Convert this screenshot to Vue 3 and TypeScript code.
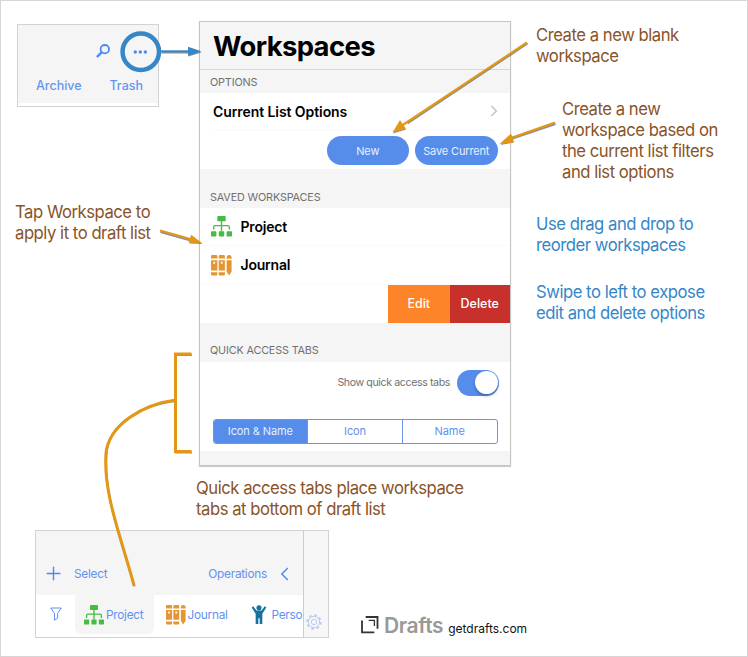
<script setup lang="ts">
import { ref } from 'vue'

interface Workspace { name: string; icon: string; kind: string }
interface Note { id: string; tone: string; lines: string[] }

const workspaces: Workspace[] = [
  { name: 'Project', icon: '#tree', kind: 'green' },
  { name: 'Journal', icon: '#binders', kind: 'amber' },
]
const tabs: Workspace[] = [...workspaces, { name: 'Perso', icon: '#person', kind: 'teal' }]
const segments: string[] = ['Icon & Name', 'Icon', 'Name']
const selected = ref<string>('Icon & Name')
const activeTab = ref<string>('Project')

const notes: Note[] = [
  { id: 'blank', tone: 'brown', lines: ['Create a new blank', 'workspace'] },
  { id: 'current', tone: 'brown', lines: ['Create a new', 'workspace based on', 'the current list filters', 'and list options'] },
  { id: 'tap', tone: 'brown', lines: ['Tap Workspace to', 'apply it to draft list'] },
  { id: 'drag', tone: 'blue', lines: ['Use drag and drop to', 'reorder workspaces'] },
  { id: 'expose', tone: 'blue', lines: ['Swipe to left to expose', 'edit and delete options'] },
  { id: 'quick', tone: 'brown', lines: ['Quick access tabs place workspace', 'tabs at bottom of draft list'] },
]
</script>

<template>
  <main class="canvas">
    <svg class="defs" aria-hidden="true">
      <symbol id="tree" viewBox="0 0 21 21">
        <rect x="6.3" y="0" width="8.4" height="5.2" rx=".7" fill="currentColor" />
        <path d="M10.5 5v10.5M2.7 13.6v-2.4q0-1.6 1.6-1.6h12.4q1.6 0 1.6 1.6v2.4" fill="none" stroke="currentColor" stroke-width="1.4" />
        <rect x="0" y="15.3" width="5.4" height="5.2" rx=".7" fill="currentColor" />
        <rect x="7.8" y="15.3" width="5.4" height="5.2" rx=".7" fill="currentColor" />
        <rect x="15.6" y="15.3" width="5.4" height="5.2" rx=".7" fill="currentColor" />
      </symbol>
      <symbol id="binders" viewBox="0 0 21 21">
        <g fill="currentColor">
          <path d="M1.200 0h4q1.200 0 1.200 1.200V3.600H0V1.200Q0 0 1.200 0zM0 17.200h6.400v2.300q0 1-1.200 1H1.200q-1.200 0-1.200-1z" />
          <path d="M8.900 0h3.800q1.200 0 1.200 1.200V3.600H7.700V1.200Q7.700 0 8.900 0zM7.700 17.200h6.200v2.300q0 1-1.200 1H8.900q-1.200 0-1.200-1z" />
          <path fill-rule="evenodd" d="M0 5.200h6.400v10.400H0zM2.300 6.800v2h1.800v-2zM7.700 5.200h6.200v10.400H7.700zM9.900 6.800v2h1.800v-2z" />
          <path d="M15.600 3.800V2.200q0-2.200 2.500-2.200t2.500 2.200v1.600zM15.600 5.200h5V16.600l-2.500 3.900-2.500-3.900z" />
        </g>
      </symbol>
      <symbol id="person" viewBox="0 0 16 21">
        <circle cx="8" cy="3" r="2.700" fill="currentColor" />
        <path d="M.3 2.700 2 1.300 5.300 5.900h5.400L14 1.300l1.700 1.400-4.200 6.500V20H8.700v-6H7.300v6H4.500V9.200z" fill="currentColor" />
      </symbol>
    </svg>

    <section class="panel folders">
      <div class="folders-body">
        <div class="tools">
          <svg class="key" viewBox="0 0 14 14"><circle cx="8.800" cy="5.200" r="4.200" /><path d="M5.700 8.400 1.500 12.300" /></svg>
          <svg class="dots" viewBox="0 0 14 4"><circle cx="2.300" cy="2" r="1.700" /><circle cx="7.300" cy="2" r="1.700" /><circle cx="12.300" cy="2" r="1.700" /></svg>
        </div>
        <div class="filters"><span>Archive</span><span>Trash</span></div>
      </div>
    </section>

    <section class="panel sheet">
      <h1>Workspaces</h1>
      <h2 class="first">OPTIONS</h2>
      <div class="options">
        <div class="list-options">
          <span>Current List Options</span>
          <svg viewBox="0 0 8 12"><path d="m1.300 1 5 5-5 5" /></svg>
        </div>
        <div class="buttons"><button>New</button><button>Save Current</button></div>
      </div>
      <h2>SAVED WORKSPACES</h2>
      <div class="saved">
        <div v-for="w in workspaces" :key="w.name" class="row">
          <svg class="icon" :class="w.kind"><use :href="w.icon" /></svg>
          <span>{{ w.name }}</span>
        </div>
        <div class="swipe"><span class="edit">Edit</span><span class="delete">Delete</span></div>
      </div>
      <h2 class="last">QUICK ACCESS TABS</h2>
      <div class="quick-tabs">
        <div class="show"><span>Show quick access tabs</span><i class="switch"><i class="knob"></i></i></div>
        <div class="segmented">
          <span v-for="s in segments" :key="s" :class="{ on: s === selected }" @click="selected = s">{{ s }}</span>
        </div>
      </div>
    </section>

    <section class="panel drafts">
      <div class="list">
        <div class="actions">
          <svg class="plus" viewBox="0 0 16 16"><path d="M8 .7v14.600M.7 8h14.600" /></svg>
          <span class="select">Select</span>
          <span class="operations">Operations</span>
          <svg class="back" viewBox="0 0 9 14"><path d="M7.800 1 1.800 7l6 6" /></svg>
        </div>
        <div class="tabbar">
          <svg class="funnel" viewBox="0 0 12 14"><path d="M.7 1h10.600L7.600 6.300v4.900l-3.100 2V6.300z" /></svg>
          <div v-for="t in tabs" :key="t.name" class="tab" :class="[t.kind + '-tab', { active: t.name === activeTab }]" @click="activeTab = t.name">
            <svg class="icon" :class="t.kind"><use :href="t.icon" /></svg>
            <span>{{ t.name }}</span>
          </div>
        </div>
      </div>
      <div class="edge">
        <svg viewBox="0 0 16 16">
          <circle cx="8" cy="8" r="6.900" stroke-width="1.800" stroke-dasharray="2.700 2.719" />
          <circle cx="8" cy="8" r="5.600" />
          <circle cx="8" cy="8" r="2.700" />
        </svg>
      </div>
    </section>

    <p v-for="n in notes" :key="n.id" class="note" :class="[n.tone, n.id]">
      <span v-for="line in n.lines" :key="line">{{ line }}</span>
    </p>

    <div class="brand">
      <svg viewBox="0 0 18 18"><path d="M1 4.500v11.900h12.300M4.700 1h11.800v11.700" /><path class="inner" d="M7.700 4.300h5.700v5.700" /></svg>
      <strong>Drafts</strong><span>getdrafts.com</span>
    </div>

    <svg class="arrows" viewBox="0 0 748 657">
      <g class="shade" transform="translate(.5 1)">
        <path d="M161 51.500h30M527 42.500 407 122.500M555 123 512 137.500M160 231l32 9" />
        <path d="m201 51.500-13-4v8zM392.500 132.500l7.500-11.500 5.500 7.500zM500 144l11.500-10 2 7.500zM202 243l-13-.5 2.500-7.500z" class="head" />
        <path d="M191.500 354h-16v97.500h16M175.500 400C137 405 108 424 106 453c-3 42 15 87 28 132.500" />
      </g>
      <circle class="ring" cx="140.800" cy="51.800" r="18.200" />
      <path class="blue-line" d="M160 51.300h30" />
      <path class="blue-head" d="m201.500 51.300-13.500-4.500v9z" />
      <g class="orange">
        <path d="M527 42.500 402 125.500M555 122.500 511 138M160 230.500l32 9" />
        <path class="head" d="m392.500 132.500 7.500-12.500 6 8.700zM499.500 144l11.500-10.500 2.500 9zM202 243l-13.500-.3 2.700-8z" />
        <path class="thick" d="M191.500 354h-16v97.500h16" />
        <path class="thick" d="M176 400C143 404 109 425 106 453c-3 41 15 83 28 132.500" />
      </g>
    </svg>
  </main>
</template>

<style>
body { margin: 0; background: #fff; }
</style>

<style scoped>
.canvas { position: relative; box-sizing: border-box; width: 748px; height: 657px; overflow: hidden; border: 1px solid #d6d6d6; background: #fff; font-family: Inter, Roboto, sans-serif; }
.canvas * { box-sizing: border-box; }
.defs { position: absolute; width: 0; height: 0; }
svg { display: block; flex: none; fill: none; overflow: visible; }
.green { color: #45bd41; }
.amber { color: #e59632; }
.teal { color: #16759e; }

.panel { position: absolute; border: 1px solid #d2d2d2; background: #fff; }
.folders { left: 16px; top: 23px; width: 142px; height: 83px; color: #6595f0; }
.folders-body { height: 78px; padding: 18px 15px 0 18px; background: #f5f5f5; }
.tools { display: flex; align-items: center; justify-content: flex-end; gap: 23px; height: 17px; margin-right: -4px; }
.key { width: 14px; height: 14px; margin-top: -1px; stroke: #5089ed; stroke-width: 1.800; stroke-linecap: round; }
.key path { stroke-width: 2.400; }
.dots { width: 14px; height: 4px; margin-top: 1px; fill: #5089ed; }
.filters { display: flex; justify-content: space-between; margin-top: 17px; font-size: 12.500px; line-height: 17px; font-weight: 500; }

.sheet { left: 198px; top: 20px; width: 312px; height: 445px; overflow: hidden; border-color: #c5c5c5; background: #f5f5f5; box-shadow: 0 1px 1px #ccc; }
h1 { margin: 0; height: 48px; padding-left: 13px; border-bottom: 1px solid #d6d6d6; font-size: 27.400px; line-height: 49px; font-weight: 700; letter-spacing: -.6px; color: #000; }
h2 { margin: 0; height: 38.500px; padding: 21px 0 0 10px; font-size: 10.800px; line-height: 15px; font-weight: 400; letter-spacing: -.15px; color: #707070; }
h2.first { height: 22.500px; padding-top: 5px; }
h2.last { height: 39px; padding-top: 20px; }
.options { height: 76.500px; padding: 0 12.500px 0 13px; background: #fff; }
.list-options { display: flex; align-items: center; justify-content: space-between; height: 38.500px; border-bottom: 1px solid #f9f9f9; font-size: 14px; font-weight: 600; letter-spacing: -.08px; color: #000; }
.list-options svg { width: 8px; height: 12px; stroke: #c4c4c4; stroke-width: 1.500; }
.buttons { display: flex; justify-content: flex-end; gap: 6px; padding-top: 5px; }
button { width: 82.500px; height: 29px; padding: 0; border: 0; border-radius: 15px; background: #568cea; color: #e8f0ff; font: 400 11px Inter, sans-serif; letter-spacing: -.15px; }
.saved { height: 115.500px; background: #fff; }
.row { display: flex; align-items: center; gap: 8.500px; height: 38.500px; padding-left: 11px; border-bottom: 1px solid #fafafa; font-size: 14px; font-weight: 600; letter-spacing: -.2px; color: #000; }
.row .icon { width: 21px; height: 21px; margin-top: 1px; }
.swipe { display: flex; justify-content: flex-end; height: 38.500px; color: #fff; font-size: 12.500px; font-weight: 500; line-height: 38px; text-align: center; }
.edit { width: 61.500px; background: #fd8428; }
.delete { width: 60.500px; background: #c8302b; }
.quick-tabs { height: 88.500px; padding: 7px 11px 0 12.500px; background: #fff; }
.show { display: flex; align-items: center; justify-content: flex-end; gap: 6.500px; height: 27px; font-size: 10.600px; letter-spacing: -.38px; color: #707070; }
.switch { display: flex; justify-content: flex-end; width: 42.500px; height: 26px; padding: 1.500px; border-radius: 13px; background: #568cea; }
.knob { width: 23px; height: 23px; border-radius: 50%; background: #fff; box-shadow: 0 2px 3px #0004; }
.segmented { display: flex; width: 285px; height: 25px; margin-top: 22.500px; border: 1px solid #6896ed; border-radius: 3px; overflow: hidden; font-size: 11px; line-height: 23px; text-align: center; letter-spacing: -.1px; color: #5d91ee; }
.segmented span { flex: 1; border-right: 1px solid #6896ed; }
.segmented span:last-child { border-right: 0; }
.segmented .on { background: #568cea; color: #e6efff; }

.drafts { display: flex; left: 34px; top: 529px; width: 294px; height: 108px; font-size: 11.800px; letter-spacing: -.25px; color: #6292ee; }
.list { width: 268px; overflow: hidden; border-right: 1px solid #ccc; }
.actions { display: flex; align-items: center; height: 64px; padding: 21px 14px 0 9.500px; background: #f5f5f5; }
.plus { width: 15px; height: 15px; stroke: #5089ed; stroke-width: 1.500; }
.select { margin-left: 13.500px; }
.operations { margin-left: auto; }
.back { width: 9px; height: 14px; margin-left: 13px; stroke: #5089ed; stroke-width: 1.500; }
.tabbar { display: flex; align-items: flex-start; }
.funnel { width: 12px; height: 14px; margin: 12px 13px 0 14px; stroke: #6292ee; stroke-width: 1; }
.tab { display: flex; flex: none; align-items: center; gap: 2px; height: 39px; padding-left: 9px; border-radius: 0 0 6px 6px; }
.tab .icon { width: 20px; height: 20px; }
.green-tab { width: 79px; }
.amber-tab { width: 90px; padding-left: 11.500px; }
.teal-tab { padding-left: 7px; gap: 4.500px; }
.teal-tab .icon { width: 16px; }
.active { background: #f5f5f5; }
.edge { flex: 1; display: flex; align-items: flex-end; padding: 0 0 7px 1.500px; background: #f7f7f7; }
.edge svg { width: 16px; height: 16px; stroke: #b9cdf2; stroke-width: 1; }

.note { position: absolute; margin: 0; font-size: 17.600px; font-weight: 385; line-height: 21px; letter-spacing: -.5px; white-space: nowrap; transform: scaleX(.947); transform-origin: 0 0; }
.note span { display: block; }
.brown { color: #8a5428; }
.blue { color: #3587c8; }
.blank { left: 535px; top: 23px; }
.current { left: 561px; top: 97px; }
.tap { left: 14px; top: 200px; }
.drag { left: 535px; top: 212px; }
.expose { left: 535px; top: 280px; }
.quick { left: 195px; top: 476px; }
.brand { position: absolute; display: flex; align-items: baseline; left: 360px; top: 612px; }
.brand svg { width: 18px; height: 18px; margin-bottom: -1px; transform: translateY(1px); stroke: #333; stroke-width: 1.800; }
.brand .inner { stroke-width: 1.300; }
.brand strong { margin-left: 5px; font-size: 21px; line-height: 26px; font-weight: 600; color: #999; letter-spacing: -.4px; }
.brand span { margin-left: 5px; font-size: 12px; color: #111; }
.arrows { position: absolute; left: -1px; top: -1px; width: 748px; height: 657px; pointer-events: none; }
.ring { stroke: #3587c8; stroke-width: 4.500; }
.blue-line { stroke: #3587c8; stroke-width: 2; }
.blue-head { fill: #3587c8; }
.orange { stroke: #e39717; stroke-width: 2.200; }
.orange .thick { stroke-width: 3; }
.orange .head { fill: #e39717; stroke: none; }
.shade { stroke: #555; stroke-width: 2; opacity: .65; }
.shade .head { fill: #555; stroke: none; }
</style>
